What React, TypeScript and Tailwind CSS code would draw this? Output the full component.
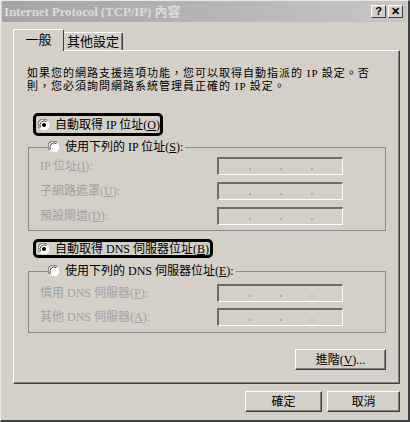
import React from 'react';

function Radio({ checked }: { checked?: boolean }) {
  return (
    <svg width="12" height="12" viewBox="0 0 12 12" className="shrink-0">
      <circle cx="6" cy="6" r="5.5" fill="#ffffff" />
      <path d="M1.6 9.2 A5.2 5.2 0 0 1 9.2 1.6" fill="none" stroke="#808080" strokeWidth="1.2" />
      <path d="M2.6 8.4 A4.2 4.2 0 0 1 8.4 2.6" fill="none" stroke="#404040" strokeWidth="1" />
      <path d="M10.4 2.8 A5.2 5.2 0 0 1 2.8 10.4" fill="none" stroke="#d4d0c8" strokeWidth="1" />
      {checked && <circle cx="6" cy="6" r="2" fill="#000000" />}
    </svg>
  );
}

function IpField() {
  return (
    <div className="w-[126px] h-[18px] border-t-2 border-l-2 border-t-[#6e6e6e] border-l-[#6e6e6e] border-b border-r border-b-white border-r-white flex items-end justify-center gap-[29px] pb-[4px]">
      <span className="w-[2px] h-[2px] bg-[#b0b0b0]" />
      <span className="w-[2px] h-[2px] bg-[#b0b0b0]" />
      <span className="w-[2px] h-[2px] bg-[#b0b0b0]" />
    </div>
  );
}

function Button({ children, w }: { children: React.ReactNode; w: string }) {
  return (
    <div
      className={`${w} h-[21px] flex items-center justify-center text-[12px] border-t border-l border-t-white border-l-white border-b border-r border-b-[#404040] border-r-[#404040] shadow-[inset_-1px_-1px_0_#808080]`}
    >
      {children}
    </div>
  );
}

const ipRows = [
  { label: 'IP 位址', key: 'I' },
  { label: '子網路遮罩', key: 'U' },
  { label: '預設閘道', key: 'D' },
];

const dnsRows = [
  { label: '慣用 DNS 伺服器', key: 'P' },
  { label: '其他 DNS 伺服器', key: 'A' },
];

export default function App() {
  return (
    <div className="w-[410px] h-[422px] bg-[#d4d0c8] text-black font-['Liberation_Serif','Noto_Sans_CJK_TC',serif] border-t border-l border-t-[#e8e8e8] border-l-[#e8e8e8] border-r-2 border-b-2 border-r-[#404040] border-b-[#404040] flex flex-col">
      {/* title bar */}
      <div className="h-[21px] mx-[1px] bg-gradient-to-r from-[#a4a4a4] to-[#c6c6c6] flex items-center pl-[2px] pr-[4px]">
        <span className="text-[13px] font-bold text-[#dcdcdc] tracking-[-0.1px]">Internet Protocol (TCP/IP) 內容</span>
        <div className="ml-auto flex gap-[2px]">
          <div className="w-[15px] h-[13px] bg-[#d4d0c8] border-t border-l border-white border-b border-r border-b-[#404040] border-r-[#404040] flex items-center justify-center text-[11px] font-bold leading-none font-['Liberation_Sans',sans-serif]">?</div>
          <div className="w-[15px] h-[13px] bg-[#d4d0c8] border-t border-l border-white border-b border-r border-b-[#404040] border-r-[#404040] flex items-center justify-center text-[11px] font-bold leading-none font-['Liberation_Sans',sans-serif]">✕</div>
        </div>
      </div>

      <div className="pl-[12px] pr-[8px] pt-[8px]">
        {/* tabs */}
        <div className="flex items-end h-[20px]">
          <div className="relative z-10 -mb-[1px] w-[51px] h-[22px] bg-[#d4d0c8] border-t border-l border-t-white border-l-white border-r border-r-[#404040] rounded-t-[2px] flex items-center justify-center text-[13px] pb-[2px]">
            一般
          </div>
          <div className="w-[59px] h-[18px] border-t border-t-white border-r border-r-[#404040] shadow-[inset_-1px_0_0_#808080] rounded-tr-[2px] flex items-center justify-center text-[13px]">
            其他設定
          </div>
        </div>

        {/* panel */}
        <div className="h-[334px] border-t border-l border-t-white border-l-white border-r border-b border-r-[#404040] border-b-[#404040] shadow-[inset_-1px_-1px_0_#808080] pt-[16px] px-[13px] flex flex-col">
          <p className="text-[11px] leading-[13px] tracking-[1px] whitespace-nowrap">
            如果您的網路支援這項功能，您可以取得自動指派的 IP 設定。否
            <br />
            則，您必須詢問網路系統管理員正確的 IP 設定。
          </p>

          <div className="mt-[20px] ml-[6px] w-[130px] h-[23px] border-[3px] border-black rounded-[5px] flex items-center gap-[5px] pl-[2px] text-[12px]">
            <Radio checked />
            <span>
              自動取得 IP 位址(<u>O</u>)
            </span>
          </div>

          <fieldset className="mt-[4px] ml-[1px] w-[358px] border border-[#8a8a8a] pl-[11px] pt-[3px] pb-[5px]">
            <legend className="ml-[8px] h-[14px] flex items-center gap-[5px] text-[12px] pr-[2px]">
              <Radio />
              <span>
                使用下列的 IP 位址(<u>S</u>):
              </span>
            </legend>
            <div className="flex flex-col gap-[7px]">
              {ipRows.map((r) => (
                <div key={r.key} className="grid grid-cols-[177px_126px] items-center">
                  <span className="text-[12px] text-[#a2a2a2]">
                    {r.label}(<u>{r.key}</u>):
                  </span>
                  <IpField />
                </div>
              ))}
            </div>
          </fieldset>

          <div className="mt-[8px] ml-[6px] w-[180px] h-[19px] border-[3px] border-black rounded-[5px] flex items-center gap-[5px] pl-[2px] text-[12px]">
            <Radio checked />
            <span>
              自動取得 DNS 伺服器位址(<u>B</u>)
            </span>
          </div>

          <fieldset className="mt-[6px] ml-[1px] w-[358px] border border-[#8a8a8a] pl-[11px] pt-[6px] pb-[6px]">
            <legend className="ml-[8px] h-[14px] flex items-center gap-[5px] text-[12px] pr-[2px]">
              <Radio />
              <span>
                使用下列的 DNS 伺服器位址(<u>E</u>):
              </span>
            </legend>
            <div className="flex flex-col gap-[6px]">
              {dnsRows.map((r) => (
                <div key={r.key} className="grid grid-cols-[177px_126px] items-center">
                  <span className="text-[12px] text-[#a2a2a2]">
                    {r.label}(<u>{r.key}</u>):
                  </span>
                  <IpField />
                </div>
              ))}
            </div>
          </fieldset>

          <div className="mt-[16px] self-end">
            <Button w="w-[91px]">
              進階(<u>V</u>)...
            </Button>
          </div>
        </div>
      </div>

      {/* bottom buttons */}
      <div className="mt-[7px] flex justify-end gap-[5px] pr-[8px]">
        <Button w="w-[77px]">確定</Button>
        <Button w="w-[73px]">取消</Button>
      </div>
    </div>
  );
}
